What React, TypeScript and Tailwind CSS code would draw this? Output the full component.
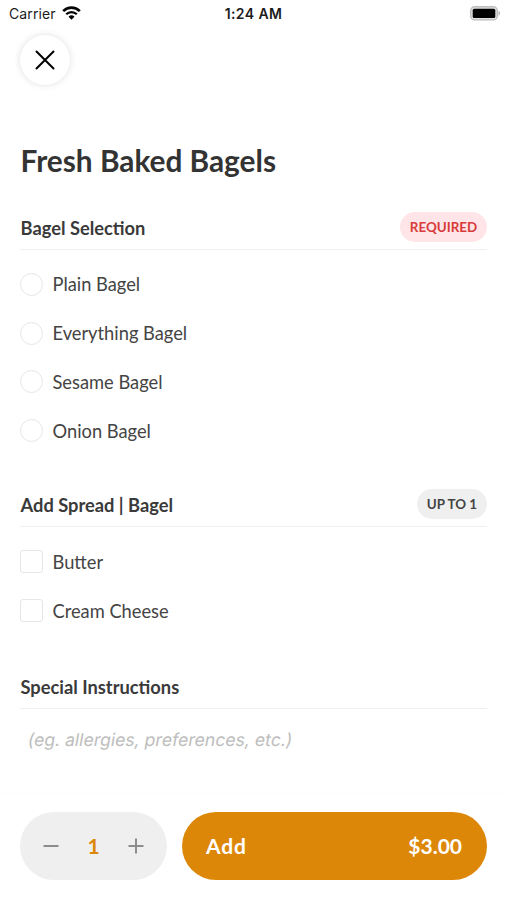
import type { ReactNode } from "react"

const bagels = ["Plain Bagel", "Everything Bagel", "Sesame Bagel", "Onion Bagel"]
const spreads = ["Butter", "Cream Cheese"]

function StatusBar() {
  return (
    <div className="grid h-[26px] grid-cols-3 items-center pr-[6px] pl-[9px] font-['Inter',sans-serif] text-[14px] text-[#1c1c1c]">
      <div className="flex items-center gap-[6px]">
        <span className="tracking-[0.1px]">Carrier</span>
        <svg width="19" height="14" viewBox="0 0 19 14" fill="none" stroke="#050505">
          <path d="M1.2 5.1a11.8 11.8 0 0 1 16.6 0" strokeWidth="2.7" />
          <path d="M4.2 8.3a7.5 7.5 0 0 1 10.6 0" strokeWidth="2.3" />
          <path d="M9.5 13.7 6.5 10.7a4.3 4.3 0 0 1 6 0z" fill="#050505" stroke="none" />
        </svg>
      </div>
      <span className="pr-[3px] text-center font-semibold tracking-[0.4px] whitespace-nowrap">1:24 AM</span>
      <svg className="justify-self-end" width="31" height="15" viewBox="0 0 31 15">
        <rect x="0.7" y="0.7" width="26.6" height="13.2" rx="4" fill="#e2e2e2" stroke="#bdbdbd" strokeWidth="1.4" />
        <rect x="2.7" y="2.7" width="22.6" height="9.2" rx="1.5" fill="#000" />
        <path d="M28.4 4.8c2.4.8 2.4 4.2 0 5z" fill="#bdbdbd" />
      </svg>
    </div>
  )
}

function SectionHeader({ title, children }: { title: string; children?: ReactNode }) {
  return (
    <div className="flex h-[45px] items-start justify-between border-b border-[#f0f0f0]">
      <h2 className="pt-[11px] pl-[0.5px] text-[18.3px] leading-[25px] font-bold text-[#3a3a3a]">{title}</h2>
      {children}
    </div>
  )
}

function Option({ label, round }: { label: string; round?: boolean }) {
  return (
    <label className="flex h-[48.8px] items-center gap-[9.5px]">
      <span className={`h-[23px] w-[23px] border-[1.5px] border-[#e6e6e6] bg-white ${round ? "rounded-full" : "rounded-[3px]"}`} />
      <span className="text-[18.3px] leading-[24px] text-[#444]">{label}</span>
    </label>
  )
}

export default function App() {
  return (
    <div className="flex h-[900px] w-[507px] flex-col bg-white font-['Lato',sans-serif] whitespace-nowrap">
      <StatusBar />
      <main className="flex-1 px-5 pt-[9px]">
        <button className="flex h-[50px] w-[50px] items-center justify-center rounded-full bg-white shadow-[0_0_7px_rgba(0,0,0,0.13)]">
          <svg width="20" height="20" viewBox="0 0 20 20" stroke="#000" strokeWidth="2" strokeLinecap="round">
            <path d="M1.5 1.5l17 17M18.5 1.5l-17 17" />
          </svg>
        </button>
        <h1 className="mt-[56px] h-[64px] pl-[0.5px] text-[29.8px] leading-[40px] font-bold text-[#333]">Fresh Baked Bagels</h1>

        <SectionHeader title="Bagel Selection">
          <span className="mt-[7px] flex h-[30px] w-[87px] items-center justify-center rounded-full bg-[#ffe5e7] pt-px text-[13.4px] font-bold text-[#d93a3a]">
            REQUIRED
          </span>
        </SectionHeader>
        <div className="mt-[10px] mb-[26.8px]">
          {bagels.map((bagel) => (
            <Option key={bagel} label={bagel} round />
          ))}
        </div>

        <SectionHeader title="Add Spread | Bagel">
          <span className="mt-[7px] flex h-[30px] w-[70px] items-center justify-center rounded-full bg-[#efefef] pt-px text-[13.4px] font-bold text-[#444]">
            UP TO 1
          </span>
        </SectionHeader>
        <div className="mt-[10.4px] mb-[29px]">
          {spreads.map((spread) => (
            <Option key={spread} label={spread} />
          ))}
        </div>

        <SectionHeader title="Special Instructions" />
        <p className="mt-[19px] w-fit -skew-x-[10deg] pl-[8px] font-['Inter',sans-serif] text-[17.6px] leading-[24px] text-[#bdbdbd]">
          (eg. allergies, preferences, etc.)
        </p>
      </main>

      <footer className="flex h-[107px] gap-[15px] border-t border-[#fcfcfc] px-5 pt-[18px]">
        <div className="flex h-[68px] w-[147px] items-center justify-between rounded-full bg-[#efefef] px-[23px] text-[#8c8c8c]">
          <svg width="16" height="16" viewBox="0 0 16 16" stroke="currentColor" strokeWidth="2">
            <path d="M0.5 8h15" />
          </svg>
          <span className="text-[21px] font-bold text-[#dc8708]">1</span>
          <svg width="16" height="16" viewBox="0 0 16 16" stroke="currentColor" strokeWidth="2">
            <path d="M0.5 8h15M8 0.5v15" />
          </svg>
        </div>
        <button className="flex h-[68px] w-[305px] items-center justify-between rounded-full bg-[#dc8708] pr-[25px] pl-[24px] text-[21px] font-bold text-white">
          <span className="tracking-[0.8px]">Add</span>
          <span>$3.00</span>
        </button>
      </footer>
    </div>
  )
}
